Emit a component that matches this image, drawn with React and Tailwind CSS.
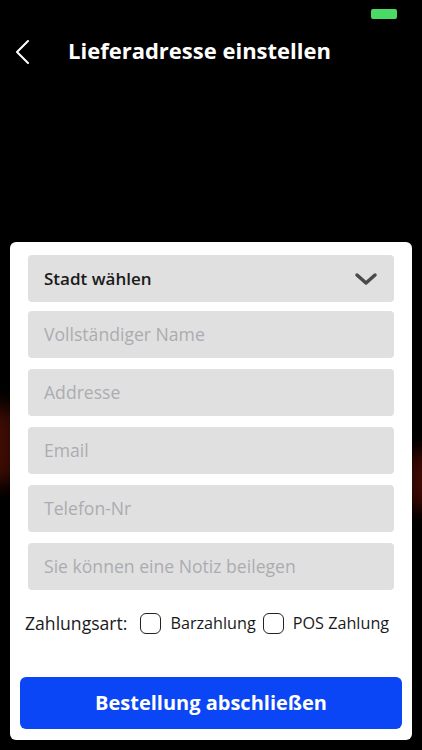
import React from "react";

const font = { fontFamily: '"Open Sans", "Noto Sans", sans-serif' };

function Field({ children }) {
  return (
    <div className="h-[47px] rounded-[4px] bg-[#e0e0e0] flex items-center pl-[16px] pr-[16px]">
      <span className="text-[17.6px] text-[#acacb0]">{children}</span>
    </div>
  );
}

function Box() {
  return <span className="inline-block w-[21px] h-[21px] rounded-[6px] border-[1.5px] border-[#222]" />;
}

export default function App() {
  return (
    <div className="relative w-full h-[750px] bg-black overflow-hidden flex flex-col" style={font}>
      <div className="absolute left-[-22px] top-[405px] w-[40px] h-[80px] rounded-full bg-[#6a1606] blur-[10px] opacity-60" />
      <div className="absolute right-[-22px] top-[450px] w-[38px] h-[60px] rounded-full bg-[#6a1006] blur-[9px] opacity-60" />
      <div className="h-[28px] flex justify-end pr-[25px] pt-[9px]">
        <div className="w-[26px] h-[10px] rounded-[2px] bg-[#4cd964]" />
      </div>
      <div className="h-[46px] flex items-center">
        <svg className="ml-[14px] mt-[1px]" width="18" height="26" viewBox="0 0 18 26" fill="none">
          <path d="M14 2 L3 13 L14 24" stroke="white" strokeWidth="2" strokeLinecap="round" strokeLinejoin="round" />
        </svg>
        <h1 className="ml-[36px] -mt-[1px] text-white text-[22px] font-bold">Lieferadresse einstellen</h1>
      </div>
      <div className="h-[168px]" />
      <div className="relative mx-[10px] bg-white rounded-[6px] pt-[13px] pb-[11px] flex flex-col">
        <div className="px-[18px] flex flex-col">
          <div className="h-[47px] rounded-[4px] bg-[#e0e0e0] flex items-center justify-between pl-[16px] pr-[16px]">
            <span className="text-[17px] font-semibold text-[#1a1a1a]">Stadt wählen</span>
            <svg width="24" height="14" viewBox="0 0 24 14" fill="none">
              <path d="M3 3 L12 11 L21 3" stroke="#4a4a4a" strokeWidth="3.5" strokeLinecap="round" strokeLinejoin="round" />
            </svg>
          </div>
          <div className="mt-[9px] flex flex-col gap-[11px]">
            <Field>Vollständiger Name</Field>
            <Field>Addresse</Field>
            <Field>Email</Field>
            <Field>Telefon-Nr</Field>
            <Field>Sie können eine Notiz beilegen</Field>
          </div>
        </div>
        <div className="mt-[22px] h-[23px] flex items-center pl-[15px] text-[#1a1a1a]">
          <span className="text-[17.6px]">Zahlungsart:</span>
          <span className="ml-[13px] flex items-center"><Box /></span>
          <span className="ml-[9px] text-[16.2px]">Barzahlung</span>
          <span className="ml-[7px] flex items-center"><Box /></span>
          <span className="ml-[9px] text-[16.2px]">POS Zahlung</span>
        </div>
        <button className="mt-[42px] mx-[10px] h-[52px] rounded-[6px] bg-[#0a46f5] text-white text-[20px] font-bold flex items-center justify-center">
          Bestellung abschließen
        </button>
      </div>
    </div>
  );
}
